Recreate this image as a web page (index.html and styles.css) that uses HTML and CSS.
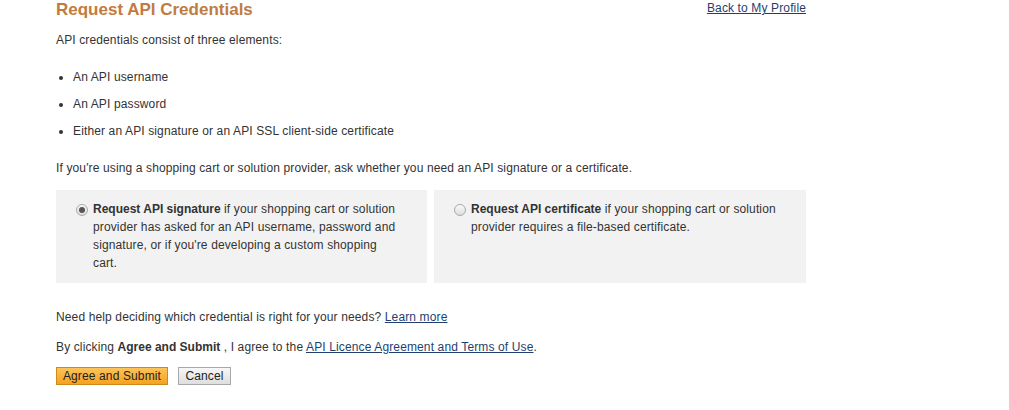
FILE: index.html
```html
<!DOCTYPE html>
<html lang="en">
<head>
  <meta charset="UTF-8">
  <title>Request API Credentials</title>
  <link rel="stylesheet" href="styles.css">
</head>
<body>
  <div class="container">
    <div class="header">
      <h1>Request API Credentials</h1>
      <a href="#" class="back-link">Back to My Profile</a>
    </div>

    <p class="intro">API credentials consist of three elements:</p>

    <ul class="elements">
      <li>An API username</li>
      <li>An API password</li>
      <li>Either an API signature or an API SSL client-side certificate</li>
    </ul>

    <p class="note">If you're using a shopping cart or solution provider, ask whether you need an API signature or a certificate.</p>

    <div class="options">
      <label class="option">
        <input type="radio" name="cred" value="signature" checked>
        <span class="option-text"><b>Request API signature</b> if your shopping cart or solution provider has asked for an API username, password and signature, or if you're developing a custom shopping cart.</span>
      </label>
      <label class="option">
        <input type="radio" name="cred" value="certificate">
        <span class="option-text"><b>Request API certificate</b> if your shopping cart or solution provider requires a file-based certificate.</span>
      </label>
    </div>

    <p class="help">Need help deciding which credential is right for your needs? <a href="#">Learn more</a></p>
    <p class="agree">By clicking <b>Agree and Submit</b> , I agree to the <a href="#">API Licence Agreement and Terms of Use</a>.</p>

    <div class="actions">
      <button class="btn btn-primary">Agree and Submit</button>
      <button class="btn btn-cancel">Cancel</button>
    </div>
  </div>
</body>
</html>
```

FILE: styles.css
```css
body {
  margin: 0;
  font-family: 'Liberation Sans', Arial, sans-serif;
  font-size: 12px;
  line-height: 18px;
  letter-spacing: 0.13px;
  color: #333;
  background: #fff;
}

b {
  letter-spacing: 0;
}

a {
  color: #1f3f6e;
  text-decoration: underline;
}

.container {
  width: 750px;
  margin-left: 56px;
}

.header {
  display: flex;
  justify-content: space-between;
  align-items: flex-start;
}

h1 {
  margin: 0;
  font-size: 17px;
  line-height: 20px;
  font-weight: bold;
  letter-spacing: 0;
  color: #c27b3f;
}

.back-link {
  line-height: 16px;
}

p {
  margin: 0;
}

.intro {
  margin-top: 11px;
}

.elements {
  margin: 19px 0 0;
  padding-left: 17px;
}

.elements li {
  margin-bottom: 9px;
}

.elements li:last-child {
  margin-bottom: 0;
}

.note {
  margin-top: 19px;
}

.options {
  display: grid;
  grid-template-columns: 371px 372px;
  gap: 7px;
  margin-top: 13px;
}

.option {
  display: flex;
  align-items: flex-start;
  gap: 5px;
  background: #f2f2f2;
  padding: 10px 28px 11px 20px;
  min-height: 72px;
}

.option-text {
  flex: 1;
}

.option input {
  appearance: none;
  -webkit-appearance: none;
  flex: none;
  width: 12px;
  height: 12px;
  margin: 4px 0 0;
  border: 1px solid #a9a9a9;
  border-radius: 50%;
  background: linear-gradient(#fafafa, #dedede);
  box-sizing: border-box;
  position: relative;
}

.option input:checked::after {
  content: "";
  position: absolute;
  left: 2px;
  top: 2px;
  width: 6px;
  height: 6px;
  border-radius: 50%;
  background: #555;
}

.help {
  margin-top: 25px;
}

.agree {
  margin-top: 12px;
}

.actions {
  display: flex;
  gap: 10px;
  margin-top: 11px;
}

.btn {
  font-family: 'Liberation Sans', Arial, sans-serif;
  font-size: 12px;
  line-height: 14px;
  letter-spacing: 0.13px;
  height: 18px;
  padding: 0 5px;
  color: #222;
  border: 1px solid #a8a8a8;
  background: linear-gradient(#f7f7f7, #dedede);
  border-radius: 0;
}

.btn-primary {
  width: 112px;
  border-color: #d08a1a;
  background: linear-gradient(#fdc35c, #f5a21f);
}

.btn-cancel {
  width: 53px;
}
```
